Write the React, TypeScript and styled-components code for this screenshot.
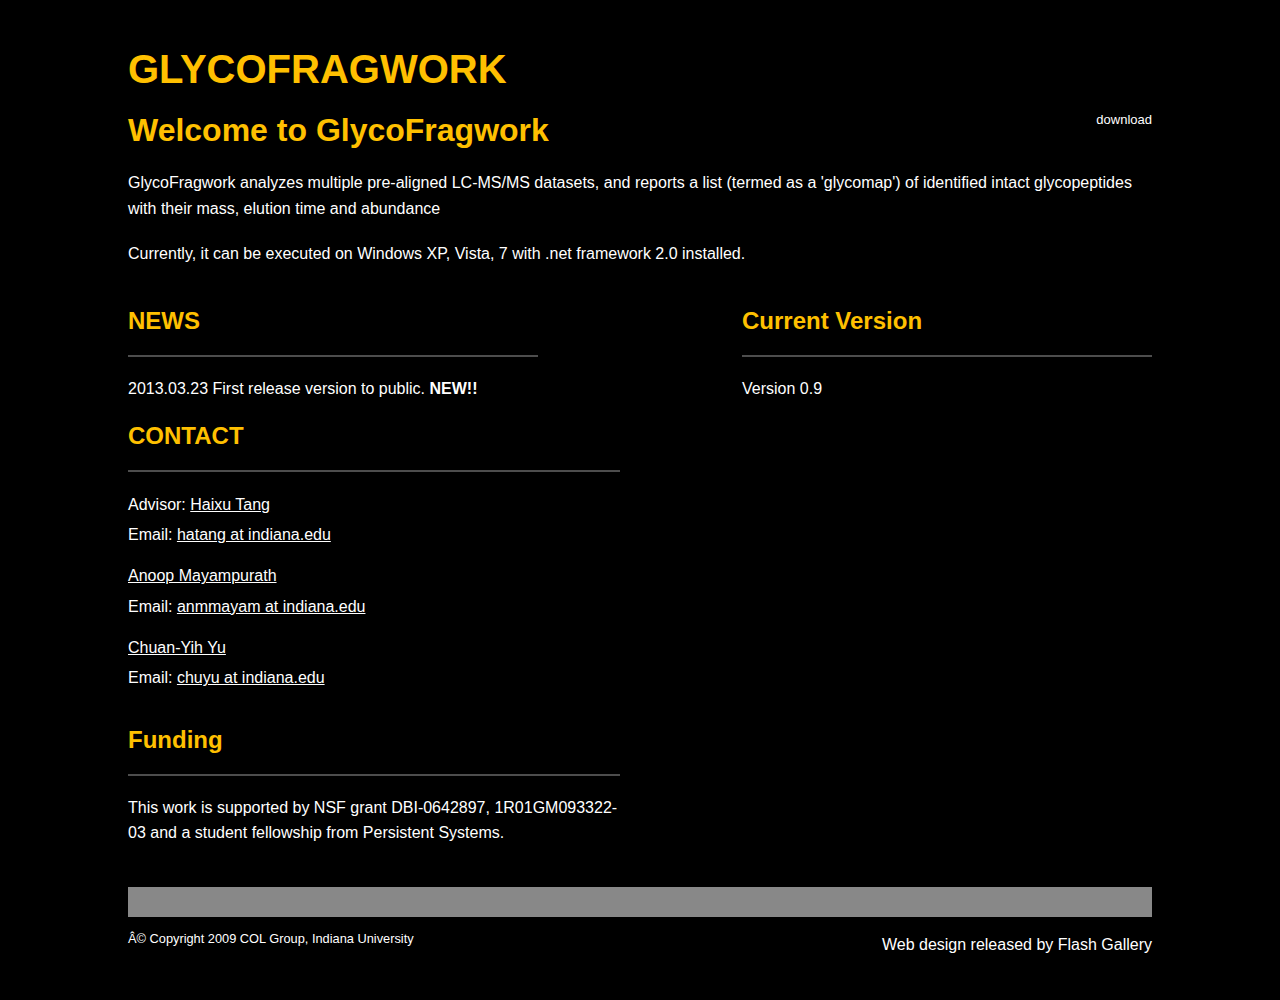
import React from "react";
import styled, { createGlobalStyle } from "styled-components";

const Global = createGlobalStyle`
  html, body { margin: 0; padding: 0; background: #000; }
  body { font-family: "Liberation Sans", Arial, sans-serif; color: #fff; }
`;

const Page = styled.div`
  width: 1024px;
  margin: 0 auto;
  padding: 45px 0 40px;
`;

const Title = styled.h1`
  margin: 0;
  font-size: 40px;
  line-height: 48px;
  font-weight: bold;
  color: #ffc000;
`;

const HeaderRow = styled.div`
  display: flex;
  justify-content: space-between;
  align-items: flex-start;
  margin-top: 18px;
`;

const Welcome = styled.h2`
  margin: 0;
  font-size: 32px;
  line-height: 38px;
  font-weight: bold;
  color: #ffc000;
`;

const SmallLink = styled.a`
  font-size: 13px;
  line-height: 15px;
  margin-top: 1px;
  color: #fff;
  text-decoration: none;
`;

const Para = styled.p<{ $mt?: number }>`
  margin: ${(p) => p.$mt ?? 0}px 0 0;
  font-size: 16px;
  line-height: 25.6px;
  color: #fff;
`;

const Columns = styled.div`
  display: flex;
  justify-content: space-between;
  align-items: flex-start;
  margin-top: 40px;
`;

const Section = styled.div<{ $w: number; $mt?: number }>`
  width: ${(p) => p.$w}px;
  margin-top: ${(p) => p.$mt ?? 0}px;
`;

const SectionTitle = styled.h3`
  margin: 0;
  font-size: 24px;
  line-height: 28.8px;
  font-weight: bold;
  color: #ffc000;
`;

const Rule = styled.div`
  height: 2px;
  background: #4d4d4d;
  margin: 19px 0 19px;
`;

const ContactBlock = styled.div<{ $first?: boolean }>`
  margin-top: ${(p) => (p.$first ? -1 : 10.5)}px;
`;

const Line = styled.div`
  font-size: 16px;
  line-height: 30.5px;
`;

const Link = styled.a`
  color: #fff;
  text-decoration: underline;
`;

const FooterBar = styled.div`
  height: 30px;
  background: #888;
  margin-top: 41px;
`;

const FooterRow = styled.div`
  display: flex;
  justify-content: space-between;
  align-items: flex-start;
`;

const Copyright = styled.div`
  font-size: 12.8px;
  line-height: 16px;
  margin-top: 14px;
`;

const Credit = styled.div`
  font-size: 16px;
  line-height: 25.6px;
  margin-top: 15px;
`;

export default function App() {
  return (
    <>
      <Global />
      <Page>
        <Title>GLYCOFRAGWORK</Title>
        <HeaderRow>
          <Welcome>Welcome to GlycoFragwork</Welcome>
          <SmallLink href="#">download</SmallLink>
        </HeaderRow>
        <Para $mt={21}>
          GlycoFragwork analyzes multiple pre-aligned LC-MS/MS datasets, and reports a list (termed as a
          'glycomap') of identified intact glycopeptides with their mass, elution time and abundance
        </Para>
        <Para $mt={20}>
          Currently, it can be executed on Windows XP, Vista, 7 with .net framework 2.0 installed.
        </Para>
        <Columns>
          <Section $w={410}>
            <SectionTitle>NEWS</SectionTitle>
            <Rule />
            <Para>
              2013.03.23 First release version to public. <b>NEW!!</b>
            </Para>
          </Section>
          <Section $w={410}>
            <SectionTitle>Current Version</SectionTitle>
            <Rule />
            <Para>Version 0.9</Para>
          </Section>
        </Columns>
        <Section $w={492} $mt={21}>
          <SectionTitle>CONTACT</SectionTitle>
          <Rule />
          <ContactBlock $first>
            <Line>
              Advisor: <Link href="#">Haixu Tang</Link>
            </Line>
            <Line>
              Email: <Link href="#">hatang at indiana.edu</Link>
            </Line>
          </ContactBlock>
          <ContactBlock>
            <Line>
              <Link href="#">Anoop Mayampurath</Link>
            </Line>
            <Line>
              Email: <Link href="#">anmmayam at indiana.edu</Link>
            </Line>
          </ContactBlock>
          <ContactBlock>
            <Line>
              <Link href="#">Chuan-Yih Yu</Link>
            </Line>
            <Line>
              Email: <Link href="#">chuyu at indiana.edu</Link>
            </Line>
          </ContactBlock>
        </Section>
        <Section $w={492} $mt={32}>
          <SectionTitle>Funding</SectionTitle>
          <Rule />
          <Para>
            This work is supported by NSF grant DBI-0642897, 1R01GM093322-03 and a student fellowship
            from Persistent Systems.
          </Para>
        </Section>
        <FooterBar />
        <FooterRow>
          <Copyright>Â© Copyright 2009 COL Group, Indiana University</Copyright>
          <Credit>Web design released by Flash Gallery</Credit>
        </FooterRow>
      </Page>
    </>
  );
}
